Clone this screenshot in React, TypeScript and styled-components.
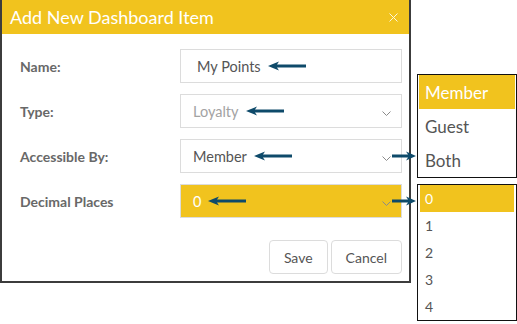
import React from "react";
import styled, { createGlobalStyle } from "styled-components";

const GlobalStyle = createGlobalStyle`
  html, body {
    margin: 0;
    padding: 0;
    background: #fff;
    font-family: Lato, "Open Sans", Arial, sans-serif;
  }
`;

const YELLOW = "#f1c31e";
const ARROW = "#0e4a6a";

const Page = styled.div`
  display: flex;
  align-items: flex-start;
  gap: 6px;
  width: 517px;
  height: 324px;
`;

const Dialog = styled.div`
  box-sizing: border-box;
  width: 411px;
  border: 2px solid #3c3c3c;
  border-top: none;
  background: #fff;
`;

const Header = styled.div`
  height: 34px;
  background: ${YELLOW};
  display: flex;
  align-items: center;
  justify-content: space-between;
  padding: 0 11px 0 8px;
`;

const Title = styled.h2`
  margin: 0;
  font-size: 18px;
  font-weight: 400;
  color: #fff;
`;

const Body = styled.div`
  padding: 15px 7px 7px 18px;
`;

const Form = styled.div`
  display: flex;
  flex-direction: column;
  gap: 11px;
`;

const Row = styled.div`
  display: grid;
  grid-template-columns: 160px 222px;
  align-items: center;
`;

const Label = styled.label`
  font-size: 14px;
  font-weight: 700;
  color: #686868;
`;

const Field = styled.div<{ $filled?: boolean; $inset?: number }>`
  position: relative;
  box-sizing: border-box;
  height: 34px;
  display: flex;
  align-items: center;
  padding: 0 10px 0 ${(p) => p.$inset ?? 12}px;
  border: 1px solid #dcdcdc;
  background: ${(p) => (p.$filled ? YELLOW : "#fff")};
`;

const Value = styled.span<{ $tone?: "normal" | "muted" | "light" }>`
  font-size: 14.5px;
  color: ${(p) =>
    p.$tone === "muted" ? "#a3a3a3" : p.$tone === "light" ? "#fff" : "#555"};
`;

const Pointer = styled.svg`
  margin-left: 7px;
  flex-shrink: 0;
`;

const Chevron = styled.svg`
  margin-left: auto;
  margin-top: 4px;
`;

const Connector = styled.svg`
  position: absolute;
  right: -15px;
  top: 50%;
  transform: translateY(-50%);
`;

const Actions = styled.div`
  display: flex;
  justify-content: flex-end;
  gap: 3px;
  margin-top: 22px;
`;

const Button = styled.button`
  box-sizing: border-box;
  height: 34px;
  padding: 0 14px;
  border: 1px solid #dcdcdc;
  border-radius: 4px;
  background: #fff;
  font-family: inherit;
  font-size: 14px;
  color: #555;
`;

const Side = styled.div`
  display: flex;
  flex-direction: column;
  gap: 6px;
  padding-top: 74px;
`;

const List = styled.ul<{ $inset: number }>`
  box-sizing: border-box;
  width: 100px;
  margin: 0;
  padding: 0 ${(p) => p.$inset}px;
  list-style: none;
  border: 1px solid #111;
  background: #fff;
`;

const Item = styled.li<{ $h: number; $size: number; $pad: number; $active?: boolean }>`
  height: ${(p) => p.$h}px;
  display: flex;
  align-items: center;
  padding-left: ${(p) => p.$pad}px;
  font-size: ${(p) => p.$size}px;
  color: ${(p) => (p.$active ? "#fff" : "#555")};
  background: ${(p) => (p.$active ? YELLOW : "transparent")};
`;

const LeftArrow = () => (
  <Pointer width="38" height="10" viewBox="0 0 38 10">
    <polygon points="0,5 11,0.5 9,3.6 38,3.6 38,6.4 9,6.4 11,9.5" fill={ARROW} />
  </Pointer>
);

const Down = () => (
  <Chevron width="9" height="5" viewBox="0 0 9 5">
    <polyline points="0.5,0.5 4.5,4.5 8.5,0.5" fill="none" stroke="#8a8a8a" strokeWidth="1" />
  </Chevron>
);

const RightArrow = () => (
  <Connector width="24" height="10" viewBox="0 0 24 10">
    <polygon points="24,5 14,0.5 16,3.6 0,3.6 0,6.4 16,6.4 14,9.5" fill={ARROW} />
  </Connector>
);

const access = ["Member", "Guest", "Both"];
const places = ["0", "1", "2", "3", "4"];

export default function App() {
  return (
    <>
      <GlobalStyle />
      <Page>
        <Dialog>
          <Header>
            <Title>Add New Dashboard Item</Title>
            <svg width="9" height="9" viewBox="0 0 9 9">
              <path d="M0.5 0.5 L8.5 8.5 M8.5 0.5 L0.5 8.5" stroke="#fff" strokeWidth="1" opacity="0.85" />
            </svg>
          </Header>
          <Body>
            <Form>
              <Row>
                <Label>Name:</Label>
                <Field $inset={16}>
                  <Value>My Points</Value>
                  <LeftArrow />
                </Field>
              </Row>
              <Row>
                <Label>Type:</Label>
                <Field>
                  <Value $tone="muted">Loyalty</Value>
                  <LeftArrow />
                  <Down />
                </Field>
              </Row>
              <Row>
                <Label>Accessible By:</Label>
                <Field>
                  <Value>Member</Value>
                  <LeftArrow />
                  <Down />
                  <RightArrow />
                </Field>
              </Row>
              <Row>
                <Label>Decimal Places</Label>
                <Field $filled>
                  <Value $tone="light">0</Value>
                  <LeftArrow />
                  <Down />
                  <RightArrow />
                </Field>
              </Row>
            </Form>
            <Actions>
              <Button>Save</Button>
              <Button>Cancel</Button>
            </Actions>
          </Body>
        </Dialog>
        <Side>
          <List $inset={1}>
            {access.map((a, i) => (
              <Item key={a} $h={34} $size={17} $pad={6} $active={i === 0}>
                {a}
              </Item>
            ))}
          </List>
          <List $inset={2}>
            {places.map((n, i) => (
              <Item key={n} $h={27} $size={14} $pad={5} $active={i === 0}>
                {n}
              </Item>
            ))}
          </List>
        </Side>
      </Page>
    </>
  );
}
